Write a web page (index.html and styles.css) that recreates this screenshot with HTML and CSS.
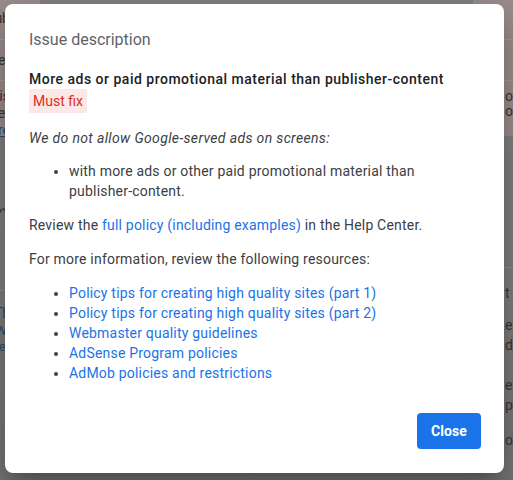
FILE: index.html
```html
<!DOCTYPE html>
<html lang="en">
<head>
<meta charset="utf-8">
<title>Issue description</title>
<link rel="stylesheet" href="styles.css">
</head>
<body>
<div class="page">
  <div class="side side-left">
    <div class="band">
      <div class="bg-row r1"><span>Sub</span></div>
      <div class="bg-rule"></div>
      <div class="bg-row r2"><span>Det</span></div>
      <div class="bg-rule"></div>
      <div class="bg-row r3"><span>Pis</span></div>
      <div class="bg-row r4"><span>Per</span></div>
      <div class="bg-row r4 link"><span>Mre</span></div>
    </div>
    <div class="rest">
      <div class="bg-row r5"><span>,J</span></div>
      <div class="bg-rule spaced"></div>
      <div class="bg-row r6 link"><span>Th</span></div>
      <div class="bg-row r7 link"><span>Wi</span></div>
      <div class="bg-row r7 link"><span>Per</span></div>
    </div>
  </div>
  <div class="side side-right">
    <div class="band">
      <div class="bg-row q1"></div>
      <div class="bg-rule"></div>
      <div class="bg-row q2"></div>
      <div class="bg-rule"></div>
      <div class="bg-row q3"><span>or</span></div>
      <div class="bg-row q4"><span>o</span></div>
    </div>
    <div class="rest">
      <div class="bg-rule spaced-r"></div>
      <div class="bg-row q5"><span>t</span></div>
      <div class="bg-row q6"><span>el</span></div>
      <div class="bg-row q7"><span>d</span></div>
      <div class="bg-row q8"><span>e</span></div>
      <div class="bg-row q9"><span>p<b class="orange">i</b></span></div>
      <div class="bg-row q10"><span>ol</span></div>
    </div>
  </div>
</div>

<div class="dialog" role="dialog" aria-labelledby="dlg-title">
  <div class="dialog-body">
    <h2 id="dlg-title" class="dialog-title">Issue description</h2>
    <div class="issue-head">More ads or paid promotional material than publisher-content</div>
    <span class="chip">Must fix</span>
    <p class="italic">We do not allow Google-served ads on screens:</p>
    <ul class="list">
      <li>with more ads or other paid promotional material than <span class="nobr">publisher-content.</span></li>
    </ul>
    <p>Review the <a href="#">full policy (including examples)</a> in the Help Center.</p>
    <p>For more information, review the following resources:</p>
    <ul class="list links">
      <li><a href="#">Policy tips for creating high quality sites (part 1)</a></li>
      <li><a href="#">Policy tips for creating high quality sites (part 2)</a></li>
      <li><a href="#">Webmaster quality guidelines</a></li>
      <li><a href="#">AdSense Program policies</a></li>
      <li><a href="#">AdMob policies and restrictions</a></li>
    </ul>
  </div>
  <div class="dialog-actions">
    <button class="btn-close" type="button">Close</button>
  </div>
</div>
</body>
</html>
```

FILE: styles.css
```css
* { box-sizing: border-box; }

html, body {
  margin: 0;
  padding: 0;
  width: 513px;
  height: 480px;
  overflow: hidden;
}

body {
  font-family: Roboto, "Noto Sans", "Liberation Sans", sans-serif;
  background: #808080;
  position: relative;
}

/* ---------- dimmed page behind the dialog ---------- */
.page {
  display: flex;
  justify-content: space-between;
  height: 480px;
  background: linear-gradient(to bottom, #828282 0, #7f7f7f 60%, #767676 100%);
}

.side {
  width: 40px;
  display: flex;
  flex-direction: column;
  font-size: 14px;
  color: #3a3636;
}

.band {
  height: 136px;
  background: #9c8e8e;
}

.rest {
  flex: 1;
}

.side-left .bg-row {
  display: flex;
  justify-content: flex-end;
  width: 10px;
  overflow: hidden;
  white-space: nowrap;
}

.side-right .bg-row {
  display: flex;
  padding-left: 32px;
  white-space: nowrap;
  overflow: hidden;
}

.bg-row { height: 20px; line-height: 20px; }

.bg-rule {
  height: 1px;
  background: #a99d9d;
}

.rest .bg-rule { background: #8e8e8e; }

.link { color: #2b4a7a; }
.side-left .band .link span { text-decoration: underline; }
.orange { color: #8a5a2a; font-weight: 400; }

/* left rows */
.r1 { margin-top: 8px; height: 31px; }
.r2 { margin-top: 10px; height: 30px; }
.r3 { margin-top: 5px; height: 17px; }
.r4 { height: 17px; }
.r5 { margin-top: 60px; }
.spaced { margin-top: 74px; }
.r6 { margin-top: 12px; }
.r7 { height: 16px; line-height: 16px; font-size: 13px; }

/* right rows */
.q1 { height: 39px; }
.q2 { height: 40px; }
.q3 { margin-top: 5px; height: 15px; }
.spaced-r { margin-top: 131px; }
.q5 { margin-top: 15px; }
.q6 { margin-top: 12px; }
.q8 { margin-top: 20px; }
.q10 { margin-top: 15px; }

/* ---------- dialog ---------- */
.dialog {
  position: absolute;
  left: 5px;
  top: 4px;
  width: 499px;
  height: 469px;
  background: #fff;
  border-radius: 8px;
  display: flex;
  flex-direction: column;
  padding: 24px;
  box-shadow: 0 11px 15px -7px rgba(0,0,0,.2),
              0 24px 38px 3px rgba(0,0,0,.14),
              0 9px 46px 8px rgba(0,0,0,.12);
  color: #3c4043;
  font-size: 14px;
  line-height: 20px;
  letter-spacing: 0.2px;
}

.dialog-body {
  flex: 1;
}

.dialog-title {
  margin: 0 0 17px;
  font-size: 16px;
  line-height: 24px;
  font-weight: 400;
  color: #5f6368;
  letter-spacing: 0;
}

.issue-head {
  color: #202124;
  font-weight: 500;
  letter-spacing: 0.5px;
}

.chip {
  display: inline-block;
  padding: 2px 4px;
  background: #fce8e6;
  color: #d93025;
  border-radius: 2px;
  line-height: 20px;
  vertical-align: top;
  letter-spacing: 0;
}

.dialog p {
  margin: 14px 0;
}

.dialog p.italic {
  font-style: italic;
  margin: 15px 0 12px;
  letter-spacing: 0.35px;
}

.list {
  margin: 13px 0 14px;
  padding-left: 40px;
}

.list.links { margin-top: 12px; }

.nobr { white-space: nowrap; }

.dialog a {
  color: #1a73e8;
  text-decoration: none;
}

.dialog-actions {
  display: flex;
  justify-content: flex-end;
  margin-right: -1px;
}

.btn-close {
  width: 64px;
  height: 36px;
  border: 0;
  border-radius: 4px;
  background: #1a73e8;
  color: #fff;
  font-family: Roboto, "Noto Sans", "Liberation Sans", sans-serif;
  font-size: 14px;
  font-weight: 700;
  letter-spacing: 0.1px;
  cursor: pointer;
}
```
